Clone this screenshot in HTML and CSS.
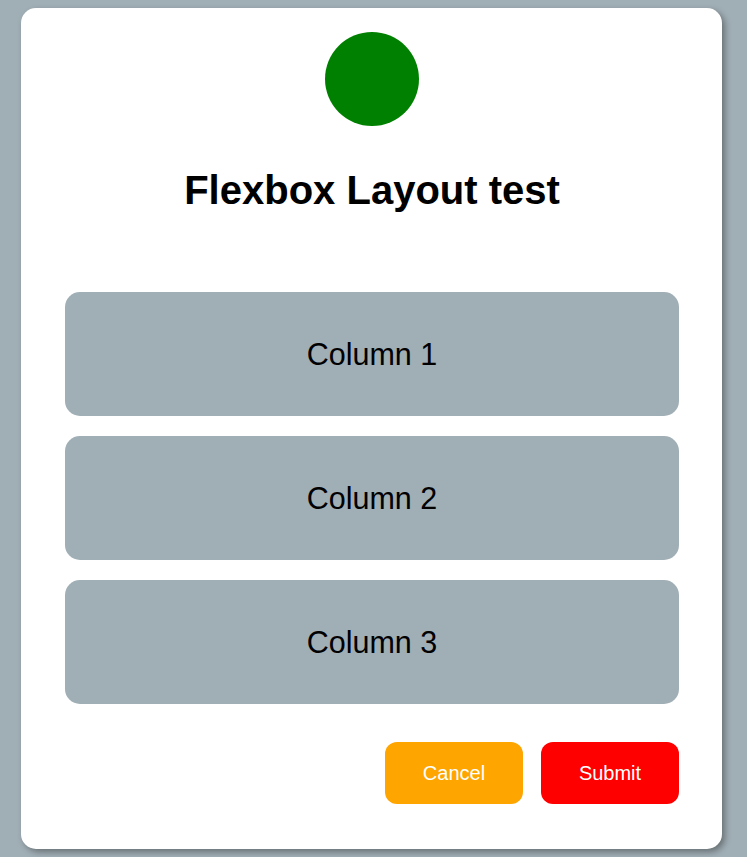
FILE: index.html
```html
<!DOCTYPE html>
<html lang="en">
<head>
<meta charset="utf-8">
<title>Flexbox Layout test</title>
<link rel="stylesheet" href="styles.css">
</head>
<body>
<div class="card">
  <div class="logo"></div>
  <h1 class="title">Flexbox Layout test</h1>
  <div class="columns">
    <div class="column">Column 1</div>
    <div class="column">Column 2</div>
    <div class="column">Column 3</div>
  </div>
  <div class="actions">
    <button class="btn btn-cancel">Cancel</button>
    <button class="btn btn-submit">Submit</button>
  </div>
</div>
</body>
</html>
```
FILE: styles.css
```css
html, body {
  margin: 0;
  padding: 0;
}
body {
  background: #a0aeb5;
  font-family: "Liberation Sans", Arial, sans-serif;
  padding: 8px 25px 8px 21px;
}
.card {
  width: 701px;
  box-sizing: border-box;
  height: 841px;
  background: #ffffff;
  border-radius: 15px;
  box-shadow: 3px 3px 6px rgba(0, 0, 0, 0.35);
  padding: 24px 43px 45px 44px;
  display: flex;
  flex-direction: column;
}
.logo {
  width: 94px;
  height: 94px;
  border-radius: 50%;
  background: #008000;
  align-self: center;
  flex: none;
}
.title {
  margin: 41px 0 0 0;
  font-size: 40px;
  line-height: 46px;
  font-weight: bold;
  text-align: center;
  color: #000;
}
.columns {
  margin-top: 79px;
  display: flex;
  flex-direction: column;
  gap: 20px;
}
.column {
  height: 124px;
  background: #a0aeb5;
  border-radius: 15px;
  display: flex;
  align-items: center;
  justify-content: center;
  font-size: 30.5px;
  color: #000;
  padding-top: 1px;
  box-sizing: border-box;
}
.actions {
  margin-top: 38px;
  display: flex;
  justify-content: flex-end;
  gap: 18px;
}
.btn {
  width: 138px;
  height: 62px;
  border: none;
  border-radius: 12px;
  color: #fff;
  font-family: "Liberation Sans", Arial, sans-serif;
  font-size: 20px;
  padding: 0;
}
.btn-cancel {
  background: #ffa500;
}
.btn-submit {
  background: #ff0000;
}
```
